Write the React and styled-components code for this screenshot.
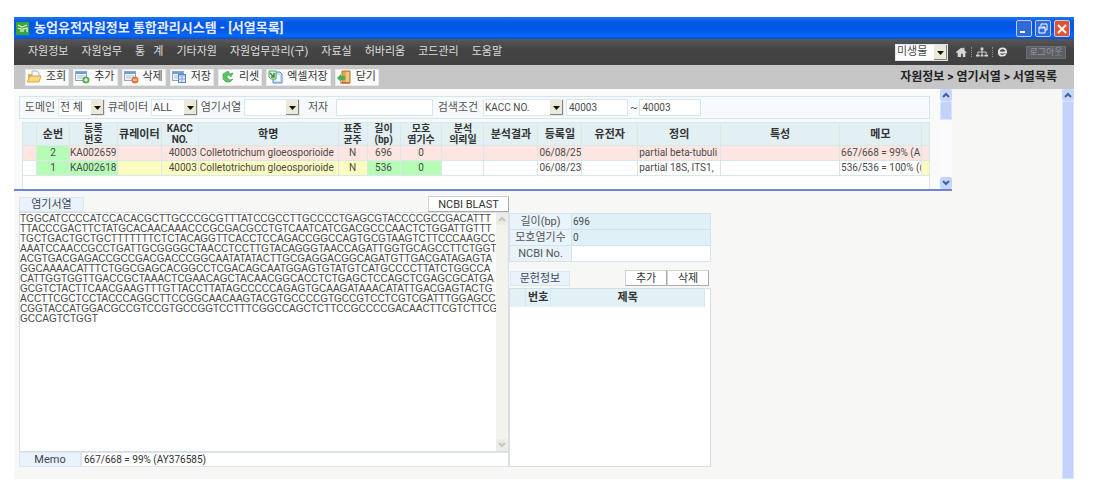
import React, { useState } from "react";
import styled, { createGlobalStyle } from "styled-components";

const GlobalStyle = createGlobalStyle`
  * {
    box-sizing: border-box;
  }

  body {
    margin: 0;
    background: #fff;
  }

  body, button, input, select, textarea {
    font-family: Roboto, "Noto Sans CJK KR", sans-serif;
    font-size: 11px;
    line-height: 14px;
    color: #4a4a4a;
  }
`;

const Page = styled.div`
  padding: 17px 26px 7px 14px;
`;

/* Title bar */
const TitleBar = styled.header`
  display: flex;
  align-items: center;
  gap: 5px;
  height: 22px;
  padding: 0 4px 0 2px;
  background: linear-gradient(#1c76f2, #0558e2 25%, #0458e8 60%, #0668fa 85%, #0450d0);
`;

const Title = styled.h1`
  flex: 1;
  margin: 0;
  font-size: 13px;
  line-height: 16px;
  font-weight: 700;
  color: #e4edff;
  white-space: pre;
`;

const WindowButtons = styled.div`
  display: flex;
  gap: 3px;
`;

const WindowButton = styled.button`
  display: flex;
  width: 16px;
  height: 17px;
  padding: 0;
  border: 1px solid #b9cdf8;
  border-radius: 2px;
  background: ${(props) => (props.$close ? "#e2532f" : "#2f69dc")};
`;

/* Menu */
const MenuBar = styled.nav`
  display: flex;
  align-items: center;
  height: 26px;
  padding: 0 8px 0 14px;
  background: linear-gradient(#575757, #444 40%, #404040);
`;

const MenuList = styled.div`
  display: flex;
  flex: 1;
  gap: 13px;
`;

const MenuLink = styled.a`
  color: #dedede;
  text-decoration: none;
  white-space: pre;
`;

const MenuIcons = styled.div`
  display: flex;
  align-items: center;
  gap: 4px;
  margin: 0 18px 0 8px;
`;

const Dots = styled.span`
  height: 10px;
  border-left: 1px dotted #8c8c8c;
`;

const LogoutButton = styled.button`
  width: 40px;
  height: 13px;
  padding: 0;
  border: 1px solid #6c6f74;
  background: #5c6066;
  color: #92969c;
  font-size: 9px;
  line-height: 10px;
`;

/* Tool bar */
const ToolBar = styled.div`
  display: flex;
  align-items: center;
  gap: 4px;
  height: 24px;
  padding: 0 17px 0 11px;
  background: #c6c6c6;
`;

const ToolButton = styled.button`
  display: flex;
  align-items: center;
  gap: 4px;
  height: 17px;
  padding: 0 2px 0 1px;
  border: 1px solid #e9e9e9;
  background: #fcfcfc;
  color: #333;
  white-space: nowrap;
`;

const Breadcrumb = styled.p`
  flex: 1;
  margin: 0;
  font-weight: 700;
  color: #222;
  text-align: right;
  word-break: keep-all;
  font-size: 12px;
`;

/* Body */
const Body = styled.div`
  display: flex;
  background: #f7f7f5;
`;

const Content = styled.main`
  flex: 1;
  min-width: 0;
`;

const ListPane = styled.section`
  display: flex;
  margin-right: 110px;
  border-bottom: 2px solid #6f84d6;
  background: #f9fbfb;
`;

const ListArea = styled.div`
  display: flex;
  flex: 1;
  flex-direction: column;
  gap: 3px;
  min-width: 0;
  padding: 7px 10px 0 5px;
`;

const SearchBar = styled.form`
  display: flex;
  align-items: center;
  gap: 2px;
  height: 23px;
  padding: 0 4px;
  border: 1px solid #d5e5ee;
  background: #f6fafd;
`;

const SearchLabel = styled.label`
  width: ${(props) => props.$width}px;
  color: #555;
  text-align: center;
  white-space: nowrap;
`;

const TextInput = styled.input`
  width: ${(props) => props.$width}px;
  height: 17px;
  padding: 0 2px;
  border: 1px solid #d5e5ee;
  background: #fff;
  font-size: 10px;
`;

const SelectBox = styled.span`
  display: grid;
  width: ${(props) => props.$width}px;
  height: 17px;
  border: 1px solid #dde8ee;
  background: #fff;

  select,
  svg {
    grid-area: 1 / 1;
  }

  select {
    appearance: none;
    width: 100%;
    padding: 0 14px 0 1px;
    border: 0;
    background: transparent;
    font-size: ${(props) => props.$size || 11}px;
  }

  svg {
    justify-self: end;
    pointer-events: none;
  }
`;

const ListTable = styled.table`
  width: calc(100% - 3px);
  margin-left: 3px;
  table-layout: fixed;
  border-collapse: collapse;
  font-size: 10px;

  td {
    height: 15px;
    padding: 0 1px;
    border: 1px solid #dbe6e8;
    overflow: hidden;
    white-space: nowrap;
  }
`;

const HeadCell = styled.th`
  height: 22px;
  padding: 0;
  border: 1px solid #dbe6e8;
  background: #e2eff3;
  font-size: ${(props) => (props.$double ? 10 : 11)}px;
  line-height: 11px;
  font-weight: 700;
  color: #333;
  white-space: pre;
`;

const Cell = styled.td`
  background: ${(props) => props.$bg};
  text-align: ${(props) => props.$align || "left"};
`;

const CodeCell = styled(Cell)`
  && {
    padding: 0;
  }
`;

const TableSpace = styled.div`
  height: 13px;
  margin: -3px 0 0 3px;
  border: solid #dbe6e8;
  border-width: 0 1px;
  background: #fff;
`;

const ScrollTrack = styled.div`
  display: flex;
  flex-direction: column;
  width: 12px;
  background: ${(props) => (props.$off ? "#f3f3ee" : "#fbfbfd")};
`;

const ScrollArrow = styled.button`
  display: flex;
  align-items: center;
  justify-content: center;
  width: 12px;
  height: 12px;
  padding: 0;
  border: 0;
  border-radius: 2px;
  background: ${(props) => (props.$off ? "#ecece6" : "#c6d5fb")};
`;

const ScrollThumb = styled.div`
  height: ${(props) => props.$height};
  border: 1px solid #dce5fd;
  background: #c3d2fb;
`;

const ScrollGap = styled.div`
  flex: 1;
`;

/* Detail */
const Detail = styled.section`
  display: grid;
  grid-template-columns: minmax(0, 490px) minmax(0, 202px);
  padding: 5px 0 12px 5px;
`;

const SequencePane = styled.div`
  display: flex;
  flex-direction: column;
`;

const SequenceHead = styled.div`
  display: flex;
  align-items: flex-end;
  justify-content: space-between;
`;

const Tag = styled.label`
  width: ${(props) => props.$width}px;
  height: 15px;
  border: 1px solid #dae7f1;
  background: #e8f3fb;
  color: #445;
  text-align: center;
`;

const PlainButton = styled.button`
  width: ${(props) => props.$width}px;
  height: 16px;
  padding: 0;
  border: 1px solid #d4d4d4;
  border-right-color: #aaa;
  border-bottom-color: #aaa;
  background: #fff;
  color: #333;
  line-height: 13px;
`;

const SequenceBox = styled.div`
  display: flex;
  height: 240px;
  border: 1px solid #d8dde6;
  background: #fff;
`;

const SequenceText = styled.textarea`
  flex: 1;
  min-width: 0;
  padding: 1px 0 0;
  border: 0;
  background: transparent;
  font-family: "Liberation Sans", sans-serif;
  font-size: 10px;
  line-height: 10px;
  resize: none;
  overflow: hidden;
  white-space: pre;
`;

const MemoRow = styled.div`
  display: flex;

  input {
    flex: 1;
    width: auto;
    height: 15px;
    color: #333;
  }
`;

const InfoPane = styled.div`
  display: flex;
  flex-direction: column;
`;

const InfoTable = styled.table`
  width: 100%;
  margin-top: 17px;
  border-collapse: collapse;

  th,
  td {
    height: 16px;
    padding: 0 1px;
    border: 1px solid #d3e3ec;
  }

  th {
    width: 62px;
    background: #e8f3fb;
    color: #555;
    font-weight: 400;
  }

  td {
    background: #dff0f7;
    font-size: 10px;
  }

  tr:last-child td {
    background: #fff;
  }
`;

const PaperHead = styled.div`
  display: flex;
  align-items: flex-end;
  margin: 8px 2px 2px 1px;

  span {
    margin-right: auto;
  }
`;

const PaperBox = styled.div`
  flex: 1;
  padding-right: 5px;
  border: 1px solid #d8dde6;
  background: #fff;
`;

const PaperTable = styled.table`
  width: 100%;
  table-layout: fixed;
  border-collapse: collapse;

  th {
    height: 18px;
    padding: 0;
    border-right: 1px solid #d5e6ed;
    background: #e2f1f6;
    color: #333;
  }
`;

const menuItems = [
  "자원정보",
  "자원업무",
  "통   계",
  "기타자원",
  "자원업무관리(구)",
  "자료실",
  "허바리움",
  "코드관리",
  "도움말",
];

const tools = [
  { icon: "open", label: "조회" },
  { icon: "add", label: "추가" },
  { icon: "remove", label: "삭제" },
  { icon: "save", label: "저장" },
  { icon: "reset", label: "리셋" },
  { icon: "excel", label: "엑셀저장" },
  { icon: "close", label: "닫기" },
];

const columns = [
  { label: "", width: 14 },
  { label: "순번", width: 33, align: "center" },
  { label: "등록\n번호", width: 48, code: true },
  { label: "큐레이터", width: 44 },
  { label: "KACC\nNO.", width: 37, align: "right" },
  { label: "학명", width: 140 },
  { label: "표준\n균주", width: 29, align: "center" },
  { label: "길이\n(bp)", width: 33, align: "center" },
  { label: "모호\n염기수", width: 42, align: "center" },
  { label: "분석\n의뢰일", width: 42 },
  { label: "분석결과", width: 54 },
  { label: "등록일", width: 44 },
  { label: "유전자", width: 56 },
  { label: "정의", width: 83 },
  { label: "특성", width: 119 },
  { label: "메모", width: 82 },
  { label: "", width: 8 },
];

const tableWidth = columns.reduce((sum, column) => sum + column.width, 0);

const pink = "#fde6e1";
const green = "#b6fcb6";
const yellow = "#fbfcc0";

const rows = [
  {
    base: pink,
    colors: { 1: green },
    cells: ["", "2", "KA002659", "", "40003", "Colletotrichum gloeosporioide", "N", "696", "0", "", "", "06/08/25", "", "partial beta-tubuli", "", "667/668 = 99% (A", ""],
  },
  {
    base: "#fff",
    colors: { 1: green, 2: green, 3: yellow, 4: yellow, 5: yellow, 6: yellow, 7: green, 8: green, 16: yellow },
    cells: ["", "1", "KA002618", "", "40003", "Colletotrichum gloeosporioide", "N", "536", "0", "", "", "06/08/23", "", "partial 18S, ITS1,", "", "536/536 = 100% ((", ""],
  },
];

const sequence = [
  "TGGCATCCCCATCCACACGCTTGCCCGCGTTTATCCGCCTTGCCCCTGAGCGTACCCCGCCGACATTT",
  "TTACCCGACTTCTATGCACAACAAACCCGCGACGCCTGTCAATCATCGACGCCCAACTCTGGATTGTTT",
  "TGCTGACTGCTGCTTTTTTTCTCTACAGGTTCACCTCCAGACCGGCCAGTGCGTAAGTCTTCCCAAGCC",
  "AAATCCAACCGCCTGATTGCGGGGCTAACCTCCTTGTACAGGGTAACCAGATTGGTGCAGCCTTCTGGT",
  "ACGTGACGAGACCGCCGACGACCCGGCAATATATACTTGCGAGGACGGCAGATGTTGACGATAGAGTA",
  "GGCAAAACATTTCTGGCGAGCACGGCCTCGACAGCAATGGAGTGTATGTCATGCCCCTTATCTGGCCA",
  "CATTGGTGGTTGACCGCTAAACTCGAACAGCTACAACGGCACCTCTGAGCTCCAGCTCGAGCGCATGA",
  "GCGTCTACTTCAACGAAGTTTGTTACCTTATAGCCCCCAGAGTGCAAGATAAACATATTGACGAGTACTG",
  "ACCTTCGCTCCTACCCAGGCTTCCGGCAACAAGTACGTGCCCCGTGCCGTCCTCGTCGATTTGGAGCC",
  "CGGTACCATGGACGCCGTCCGTGCCGGTCCTTTCGGCCAGCTCTTCCGCCCCGACAACTTCGTCTTCG",
  "GCCAGTCTGGT",
].join("\n");

function Grid() {
  return (
    <>
      <rect x="0.5" y="1.5" width="11" height="9" fill="#f4f8fd" stroke="#8ba6c6" />
      <path d="M1 2h10v2H1z" fill="#6f9ede" />
      <path d="M2 6h8M2 8h8" stroke="#a9bfd8" />
    </>
  );
}

function ToolIcon({ name }) {
  return (
    <svg width="15" height="14" viewBox="0 0 15 14">
      {name === "open" && (
        <>
          <path d="M1 4h4l1 1h6v7H1z" fill="#e5b24d" />
          <path d="M5 1h5l2 2v5H5z" fill="#f3f6fb" stroke="#a8b6c8" />
          <path d="M0 12l3-6h11l-2 6z" fill="#fbd77f" stroke="#dfa640" />
        </>
      )}
      {name === "add" && (
        <>
          <Grid />
          <circle cx="11" cy="10" r="3.5" fill="#5aab4e" />
          <path d="M9 10h4M11 8v4" stroke="#fff" />
        </>
      )}
      {name === "remove" && (
        <>
          <Grid />
          <circle cx="11" cy="10" r="3.5" fill="#e8753a" />
          <path d="M9 10h4" stroke="#fff" />
        </>
      )}
      {name === "save" && (
        <>
          <Grid />
          <rect x="6.5" y="4.5" width="7" height="8" fill="#e4effc" stroke="#5685c2" />
          <path d="M7 6h6M7 9h6M10 6v6" stroke="#78a3d8" />
        </>
      )}
      {name === "reset" && (
        <path
          d="M8 1L3 4v5l3 3h4l3-3-3 1-3-2V6l2-1 2 2 2-4-3 1z"
          fill="#58c764"
          stroke="#37a04b"
          strokeWidth="0.6"
        />
      )}
      {name === "excel" && (
        <>
          <path d="M5 2h7l2 2v9H5z" fill="#c9ddf8" stroke="#5f86c8" />
          <path d="M9 5h3v6H8z" fill="#f3f8ff" />
          <path d="M1 1h7v8H3L1 7z" fill="#e2f4e0" stroke="#56a75a" />
          <path d="M2 3l4 4M6 3v4H3" fill="none" stroke="#369343" strokeWidth="1.5" />
        </>
      )}
      {name === "close" && (
        <>
          <path d="M5 1h8v12H5z" fill="#e0a855" stroke="#b7792c" />
          <path d="M9 2h3v10H9z" fill="#f3c87d" />
          <path d="M0 8l4-4v2h4v4H4v2z" fill="#4eb054" />
          <path d="M3 13h10" stroke="#ca4c38" />
        </>
      )}
    </svg>
  );
}

function Select({ id, width, size, options, label }) {
  return (
    <SelectBox $width={width} $size={size}>
      <select id={id} aria-label={label}>
        {options.map((option) => (
          <option key={option}>{option}</option>
        ))}
      </select>
      <svg width="13" height="15" viewBox="0 0 13 15">
        <rect width="13" height="15" fill="#ece9d8" />
        <path d="M12.5 0v14.5H0" fill="none" stroke="#858276" />
        <path d="M3 6h7L6.5 10z" fill="#111" />
      </svg>
    </SelectBox>
  );
}

function Arrow({ down, off }) {
  return (
    <ScrollArrow type="button" $off={off} aria-label={down ? "아래로" : "위로"}>
      <svg width="8" height="6" viewBox="0 0 8 6">
        <path
          d={down ? "M1 1l3 3 3-3" : "M1 5l3-3 3 3"}
          fill="none"
          stroke={off ? "#c6c6bc" : "#44619f"}
          strokeWidth="2"
        />
      </svg>
    </ScrollArrow>
  );
}

function Header() {
  return (
    <>
      <TitleBar>
        <svg width="13" height="13" viewBox="0 0 13 13">
          <rect width="13" height="13" fill="#3ea43a" />
          <path d="M2 3l4 2 5-2M2 6l3 1v3M7 10V7l4-1v4" fill="none" stroke="#d8f5c8" strokeWidth="1.3" />
        </svg>
        <Title>농업유전자원정보 통합관리시스템 - [서열목록]</Title>
        <WindowButtons>
          <WindowButton aria-label="최소화">
            <svg width="14" height="15">
              <path d="M3 11h5" stroke="#fff" strokeWidth="2" />
            </svg>
          </WindowButton>
          <WindowButton aria-label="이전 크기로">
            <svg width="14" height="15">
              <path d="M5 5V3h6v6H9M3 6h6v6H3zM3 7h6" fill="none" stroke="#fff" />
            </svg>
          </WindowButton>
          <WindowButton $close aria-label="창 닫기">
            <svg width="14" height="15">
              <path d="M3 4l8 8M11 4l-8 8" stroke="#fff" strokeWidth="2" />
            </svg>
          </WindowButton>
        </WindowButtons>
      </TitleBar>

      <MenuBar>
        <MenuList>
          {menuItems.map((item) => (
            <MenuLink href="#" key={item}>
              {item}
            </MenuLink>
          ))}
        </MenuList>
        <Select width={53} label="자원 구분" options={["미생물"]} />
        <MenuIcons>
          <svg width="11" height="12" viewBox="0 0 13 12">
            <path d="M0 6l6-5 2 1V1h2v3l3 3h-2v5H8V8H6v4H2V7H0z" fill="#d6d6d6" />
          </svg>
          <Dots />
          <svg width="12" height="12" viewBox="0 0 13 12">
            <path d="M6.5 3v7M2 10V6h9v4" fill="none" stroke="#d6d6d6" />
            <path d="M5 1h3v3H5zM0 9h4v2H0zM5 9h3v2H5zM9 9h4v2H9z" fill="#d6d6d6" />
          </svg>
          <Dots />
          <svg width="11" height="12" viewBox="0 0 12 12">
            <path d="M2 6.5h8C10 3.500 8.500 2 6 2S2 3.500 2 6.200 3.500 10 6 10c1.500 0 2.700-.5 3.500-1.500" fill="none" stroke="#e6e6e6" strokeWidth="2" />
          </svg>
        </MenuIcons>
        <LogoutButton>로그아웃</LogoutButton>
      </MenuBar>

      <ToolBar>
        {tools.map((tool) => (
          <ToolButton key={tool.icon}>
            <ToolIcon name={tool.icon} />
            {tool.label}
          </ToolButton>
        ))}
        <Breadcrumb>자원정보 &gt; 염기서열 &gt; 서열목록</Breadcrumb>
      </ToolBar>
    </>
  );
}

function Search() {
  return (
    <SearchBar>
      <SearchLabel htmlFor="domain" $width={32}>도메인</SearchLabel>
      <Select id="domain" width={47} options={["전 체"]} />
      <SearchLabel htmlFor="curator" $width={42}>큐레이터</SearchLabel>
      <Select id="curator" width={47} options={["ALL"]} />
      <SearchLabel htmlFor="base" $width={42}>염기서열</SearchLabel>
      <Select id="base" width={56} options={[" "]} />
      <SearchLabel htmlFor="author" $width={32}>저자</SearchLabel>
      <TextInput id="author" $width={97} />
      <SearchLabel htmlFor="condition" $width={46}>검색조건</SearchLabel>
      <Select id="condition" width={81} size={10} options={["KACC NO."]} />
      <TextInput $width={62} defaultValue="40003" aria-label="시작 번호" />
      <span>~</span>
      <TextInput $width={62} defaultValue="40003" aria-label="끝 번호" />
    </SearchBar>
  );
}

function SequenceList() {
  return (
    <ListPane>
      <ListArea>
        <Search />
        <ListTable>
          <colgroup>
            {columns.map((column, i) => (
              <col key={i} style={{ width: `${(column.width / tableWidth) * 100}%` }} />
            ))}
          </colgroup>
          <thead>
            <tr>
              {columns.map((column, i) => (
                <HeadCell key={i} $double={column.label.includes("\n")}>
                  {column.label}
                </HeadCell>
              ))}
            </tr>
          </thead>
          <tbody>
            {rows.map((row) => (
              <tr key={row.cells[1]}>
                {row.cells.map((cell, i) => {
                  const Td = columns[i].code ? CodeCell : Cell;
                  return (
                    <Td key={i} $bg={row.colors[i] || row.base} $align={columns[i].align}>
                      {cell}
                    </Td>
                  );
                })}
              </tr>
            ))}
          </tbody>
        </ListTable>
        <TableSpace />
      </ListArea>
      <ScrollTrack>
        <Arrow />
        <ScrollThumb $height="19px" />
        <ScrollGap />
        <Arrow down />
      </ScrollTrack>
    </ListPane>
  );
}

function SequenceDetail() {
  const [text, setText] = useState(sequence);

  return (
    <Detail>
      <SequencePane>
        <SequenceHead>
          <Tag htmlFor="sequence" $width={65}>염기서열</Tag>
          <PlainButton $width={81}>NCBI BLAST</PlainButton>
        </SequenceHead>
        <SequenceBox>
          <SequenceText
            id="sequence"
            spellCheck={false}
            value={text}
            onChange={(e) => setText(e.target.value)}
          />
          <ScrollTrack $off>
            <Arrow off />
            <ScrollGap />
            <Arrow down off />
          </ScrollTrack>
        </SequenceBox>
        <MemoRow>
          <Tag htmlFor="memo" $width={62}>Memo</Tag>
          <TextInput id="memo" defaultValue="667/668 = 99% (AY376585)" />
        </MemoRow>
      </SequencePane>

      <InfoPane>
        <InfoTable>
          <tbody>
            <tr>
              <th scope="row">길이(bp)</th>
              <td>696</td>
            </tr>
            <tr>
              <th scope="row">모호염기수</th>
              <td>0</td>
            </tr>
            <tr>
              <th scope="row">NCBI No.</th>
              <td></td>
            </tr>
          </tbody>
        </InfoTable>
        <PaperHead>
          <Tag as="span" $width={60}>문헌정보</Tag>
          <PlainButton $width={42}>추가</PlainButton>
          <PlainButton $width={42}>삭제</PlainButton>
        </PaperHead>
        <PaperBox>
          <PaperTable>
            <colgroup>
              <col width="8%" />
              <col width="13%" />
              <col />
            </colgroup>
            <thead>
              <tr>
                <th></th>
                <th>번호</th>
                <th>제목</th>
              </tr>
            </thead>
          </PaperTable>
        </PaperBox>
      </InfoPane>
    </Detail>
  );
}

function App() {
  return (
    <>
      <GlobalStyle />
      <Page>
        <Header />
        <Body>
          <Content>
            <SequenceList />
            <SequenceDetail />
          </Content>
          <ScrollTrack>
            <Arrow />
            <ScrollThumb $height="100%" />
          </ScrollTrack>
        </Body>
      </Page>
    </>
  );
}

export default App;
